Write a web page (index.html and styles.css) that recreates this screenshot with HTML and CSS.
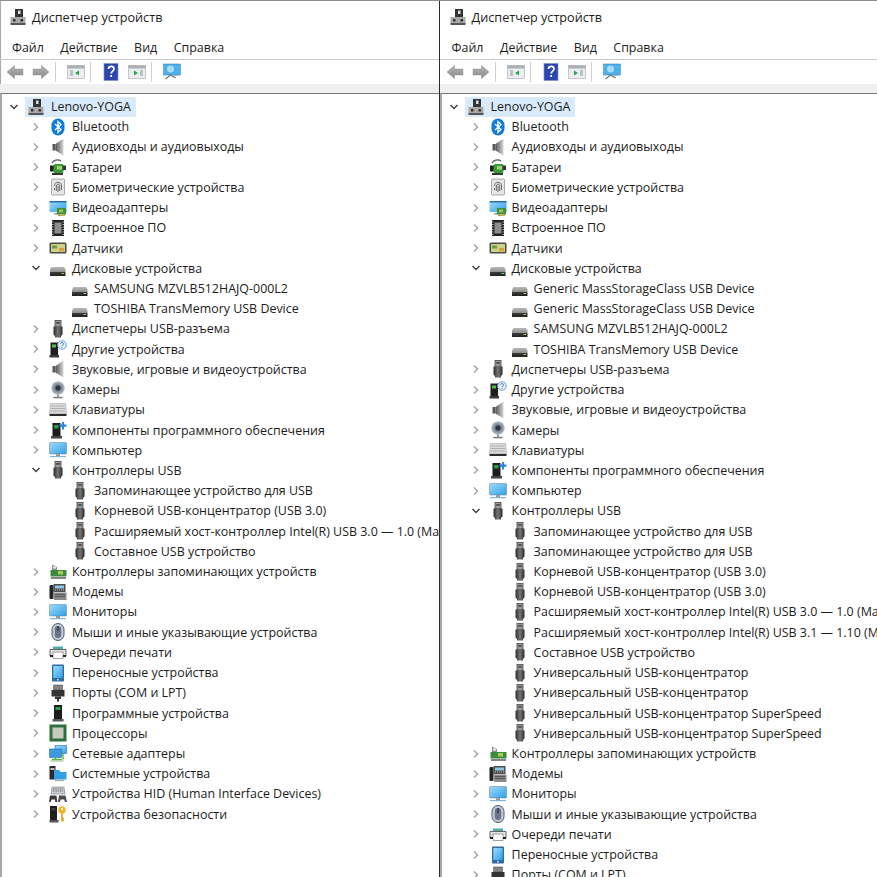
FILE: index.html
```html
<!DOCTYPE html>
<html lang="ru">
<head>
  <meta charset="UTF-8" />
  <title>Диспетчер устройств</title>
  <link rel="stylesheet" href="styles.css">
</head>
<body>

<svg class="sprite" xmlns="http://www.w3.org/2000/svg">
  <defs>
    <linearGradient id="g-usb" x1="0" x2="1" y1="0" y2="0"><stop offset="0" stop-color="#2b2b2b"/><stop offset=".5" stop-color="#777"/><stop offset="1" stop-color="#2b2b2b"/></linearGradient>
    <linearGradient id="g-screen" x1="0" x2="1" y1="0" y2="1"><stop offset="0" stop-color="#9fdcfa"/><stop offset="1" stop-color="#2f9fe6"/></linearGradient>
    <linearGradient id="g-disk" x1="0" x2="0" y1="0" y2="1"><stop offset="0" stop-color="#b9b9b9"/><stop offset=".55" stop-color="#8f8f8f"/><stop offset=".6" stop-color="#3a3a3a"/><stop offset="1" stop-color="#222"/></linearGradient>
    <linearGradient id="g-speaker" x1="0" x2="1" y1="0" y2="0"><stop offset="0" stop-color="#555"/><stop offset="1" stop-color="#d8d8d8"/></linearGradient>
    <linearGradient id="g-arrow" x1="0" x2="0" y1="0" y2="1"><stop offset="0" stop-color="#b5b5b5"/><stop offset="1" stop-color="#8b8b8b"/></linearGradient>
    <radialGradient id="g-lens"><stop offset="0" stop-color="#333"/><stop offset=".45" stop-color="#6f8191"/><stop offset="1" stop-color="#bcc4cb"/></radialGradient>

    <symbol id="chev-r" viewBox="0 0 16 16"><path d="M6 4.500 9.500 8 6 11.500" fill="none" stroke="#a6a6a6" stroke-width="1.500"/></symbol>
    <symbol id="chev-d" viewBox="0 0 16 16"><path d="M4.500 6 8 9.500 11.500 6" fill="none" stroke="#404040" stroke-width="1.500"/></symbol>

    <symbol id="i-host" viewBox="0 0 18 18"><rect x="6" y="1" width="8" height="8" fill="#333"/><rect x="9" y="2.500" width="2.500" height="3.500" fill="#ddd"/><rect x="1.500" y="9" width="15" height="7" fill="#a9a9a9"/><rect x="1.500" y="15" width="15" height="2" fill="#555"/><rect x="4" y="11" width="2.500" height="2.500" fill="#333"/><rect x="11.500" y="11" width="2.500" height="2.500" fill="#333"/></symbol>
    <symbol id="i-bt" viewBox="0 0 18 18"><rect x="2.500" y="0.500" width="13" height="17" rx="6.500" fill="#0f7ae0"/><path d="M6 6 12 11.500 9 14.500V3.500L12 6.500 6 12" fill="none" stroke="#fff" stroke-width="1.300"/></symbol>
    <symbol id="i-speaker" viewBox="0 0 18 18"><rect x="3.500" y="6" width="3" height="6.500" fill="#5a5a5a"/><path d="M6.500 6 14.500 0.500v17l-8-5z" fill="url(#g-speaker)"/></symbol>
    <symbol id="i-battery" viewBox="0 0 18 18"><path d="M3 5c1-3 6-4 9-2" fill="none" stroke="#555" stroke-width="1.300"/><rect x="1" y="7.500" width="5" height="6" fill="#222"/><rect x="4.500" y="6" width="10" height="9" rx="1.500" fill="#3a9a38"/><rect x="8" y="8" width="5.500" height="3.500" fill="#9ad46f"/><rect x="13.500" y="7.500" width="3.500" height="4.500" fill="#333"/><path d="M3 16h11" stroke="#222" stroke-width="1.800"/></symbol>
    <symbol id="i-finger" viewBox="0 0 18 18"><rect x="2.500" y="1" width="13" height="16" rx="1" fill="#e6e6e6" stroke="#a8a8a8"/><g fill="none" stroke="#5e5e5e" stroke-width=".9"><path d="M5.500 8c0-5 7-5 7 0v4"/><path d="M7.300 13V8c0-2.500 3.400-2.500 3.400 0v5"/><path d="M9 7.500V14"/><path d="M5.500 10v2"/></g></symbol>
    <symbol id="i-video" viewBox="0 0 18 18"><rect x="0.500" y="2" width="17" height="11" fill="url(#g-screen)"/><rect x="0.500" y="2" width="17" height="1.500" fill="#2a6fa8"/><rect x="5" y="14" width="7" height="1.500" fill="#9a9a9a"/><rect x="8" y="9" width="9" height="6.500" fill="#3f8f3c"/><rect x="10" y="10.500" width="4" height="3" fill="#a6c24a"/><path d="M9 16.500h7" stroke="#c9a53a" stroke-width="1.200"/></symbol>
    <symbol id="i-chip" viewBox="0 0 18 18"><rect x="3" y="1" width="12" height="16" fill="#222"/><rect x="5.500" y="3.500" width="7" height="11" fill="#8e8e8e"/><path d="M2.500 3h2M2.500 5.500h2M2.500 8h2M2.500 10.500h2M2.500 13h2M2.500 15.500h2M13.500 3h2M13.500 5.500h2M13.500 8h2M13.500 10.500h2M13.500 13h2M13.500 15.500h2" stroke="#ddd" stroke-width=".8"/></symbol>
    <symbol id="i-sensor" viewBox="0 0 18 18"><rect x="0.500" y="3.500" width="17" height="11" rx="1.500" fill="#4b4b3e"/><rect x="2" y="5" width="14" height="8" fill="#cfd08a"/><rect x="3" y="6.500" width="5" height="3" fill="#6d9c45"/><rect x="10" y="9" width="5" height="3" fill="#d6a23d"/></symbol>
    <symbol id="i-disk" viewBox="0 0 18 18"><path d="M2.500 8h12.500L16.500 10.500V17H1V10.500z" fill="url(#g-disk)"/><rect x="12.500" y="14" width="2.500" height="1" fill="#8ccf6a"/></symbol>
    <symbol id="i-usb" viewBox="0 0 18 18"><rect x="6" y="0.500" width="6" height="6" fill="#999" stroke="#444" stroke-width=".8"/><rect x="7.500" y="2" width="1.100" height="1.800" fill="#222"/><rect x="9.400" y="2" width="1.100" height="1.800" fill="#222"/><path d="M4.500 6.500h9v8L12 16v1.500H6V16l-1.500-1.500z" fill="url(#g-usb)"/></symbol>
    <symbol id="i-other" viewBox="0 0 18 18"><path d="M1.500 2.500h7.500V15H1.500z" fill="#1f1f1f"/><rect x="3" y="4.500" width="4" height="3" fill="#58b947"/><path d="M0.500 15h9.500v2.500H0.500z" fill="#3a3a3a"/><circle cx="13" cy="5" r="4.300" fill="#e8f1fb" stroke="#6d9fd8"/><path d="M11.500 4c0-2 3-2 3 0 0 1-1.500 1-1.500 2.300M13 7.200v.8" fill="none" stroke="#3d74c0"/></symbol>
    <symbol id="i-camera" viewBox="0 0 18 18"><circle cx="9" cy="7" r="6.800" fill="url(#g-lens)"/><circle cx="9" cy="7" r="2.500" fill="#30343a"/><path d="M9 13.500v2M4.500 16.500h9" stroke="#777" stroke-width="1.600"/></symbol>
    <symbol id="i-keyboard" viewBox="0 0 18 18"><path d="M1.500 2.500h15l1 10H.5z" fill="#dcdcdc" stroke="#a2a2a2" stroke-width=".6"/><path d="M2.500 5h13M2.300 7.500h13.400M2.100 10h13.800" stroke="#9a9a9a" stroke-dasharray="1.400 .6"/><rect x="0.500" y="13" width="17" height="2" fill="#2a2a2a"/></symbol>
    <symbol id="i-comp" viewBox="0 0 18 18"><rect x="3.500" y="2" width="8" height="13" fill="#1d1d1d"/><rect x="5" y="4" width="4.500" height="3.500" fill="#2d9a46"/><rect x="2" y="15" width="11" height="2.500" fill="#444"/><path d="M14 1v7.500M10.500 4.700h7" stroke="#2b84e0" stroke-width="2.200"/></symbol>
    <symbol id="i-monitor" viewBox="0 0 18 18"><rect x="0.500" y="1.500" width="17" height="11.500" rx=".8" fill="url(#g-screen)" stroke="#5f7f96" stroke-width=".5"/><rect x="7" y="13" width="4" height="2" fill="#9a9a9a"/><rect x="1" y="15" width="16" height="1.200" fill="#82b4d6"/></symbol>
    <symbol id="i-storage" viewBox="0 0 18 18"><path d="M3 1.500l5 2.500v3H3z" fill="#8f8f8f"/><rect x="4" y="3.500" width="3" height="2" fill="#eee"/><rect x="1.500" y="7" width="16" height="6.500" fill="#3c8a3e"/><rect x="9" y="8" width="5" height="3.500" fill="#aacb52"/><path d="M2 15h15" stroke="#777" stroke-width="1.800"/></symbol>
    <symbol id="i-modem" viewBox="0 0 18 18"><rect x="0.500" y="2" width="4" height="14" rx="1" fill="#252525"/><rect x="4.500" y="1" width="12" height="8" fill="#4d4d4d"/><rect x="6" y="2.500" width="9" height="3" fill="#8cc6e8"/><path d="M6 7h9" stroke="#ccc" stroke-dasharray="1 1"/><rect x="5" y="9.500" width="12.500" height="7.500" fill="#8a8a8a"/><path d="M6.500 11.500h9M6.500 13.500h9" stroke="#222" stroke-dasharray="1 1"/></symbol>
    <symbol id="i-mouse" viewBox="0 0 18 18"><rect x="3" y="0.500" width="12" height="17" rx="6" fill="#c4cad4" stroke="#4d5b70"/><rect x="5.800" y="3" width="6.400" height="12" rx="3.200" fill="#69738a"/><rect x="8.300" y="3" width="1.400" height="5" fill="#333a46"/></symbol>
    <symbol id="i-printer" viewBox="0 0 18 18"><path d="M4 3.500h10v3H4z" fill="#49a6e0"/><path d="M1 6.500h16v6.500H1z" fill="#e4e4e4" stroke="#444" stroke-width=".8"/><rect x="4" y="9" width="10" height="6.500" fill="#fff" stroke="#666" stroke-width=".6"/><path d="M1 13h3M14 13h3" stroke="#222" stroke-width="2"/><path d="M6 5h6" stroke="#6ab04c" stroke-width="1.200"/></symbol>
    <symbol id="i-portable" viewBox="0 0 18 18"><rect x="3" y="0.500" width="12" height="17" rx="1" fill="#2f6c9f"/><rect x="4.300" y="2" width="9.400" height="12" fill="url(#g-screen)"/><circle cx="9" cy="15.700" r=".9" fill="#dde"/></symbol>
    <symbol id="i-ports" viewBox="0 0 18 18"><path d="M4.500 1h9v5h-9z" fill="#999" stroke="#555" stroke-width=".6"/><path d="M6 1v5M8 1v5M10 1v5M12 1v5" stroke="#555" stroke-width=".6"/><rect x="2.500" y="6" width="13" height="6.500" fill="#333"/><path d="M6 12.500h6V15H6zM8 15h2v2.500H8z" fill="#333"/></symbol>
    <symbol id="i-soft" viewBox="0 0 18 18"><rect x="5" y="1" width="8" height="14" fill="#1c1c1c"/><rect x="6.500" y="3" width="5" height="3" fill="#2d9a46"/><rect x="3.500" y="15" width="11" height="2.500" fill="#555"/></symbol>
    <symbol id="i-cpu" viewBox="0 0 18 18"><rect x="0.500" y="0.500" width="17" height="17" fill="#2e6f3c"/><rect x="3.500" y="3.500" width="11" height="11" fill="#c9c9c0"/></symbol>
    <symbol id="i-net" viewBox="0 0 18 18"><rect x="6" y="0.500" width="11.500" height="8" fill="url(#g-screen)" stroke="#2d6ea1" stroke-width=".6"/><rect x="0.500" y="4" width="12" height="8.500" fill="#3b9ae0" stroke="#2d6ea1" stroke-width=".6"/><path d="M6.500 12.500v2M3 14.500h10M14 8.500v6" stroke="#55b04a" stroke-width="1.400"/><path d="M1.500 16h13" stroke="#8ecb7a"/></symbol>
    <symbol id="i-system" viewBox="0 0 18 18"><rect x="0.500" y="1" width="6" height="13.500" fill="#2a2a2a"/><rect x="1.500" y="3" width="4" height="2" fill="#bbb"/><path d="M5 5h5l1.500 2h6v7.500H5z" fill="#34a0e4"/><path d="M6 15.500h9" stroke="#a9a9a9" stroke-width="1.200"/></symbol>
    <symbol id="i-hid" viewBox="0 0 18 18"><path d="M3 2h12l1 7H2z" fill="#c7ccd2" stroke="#7b7f85" stroke-width=".6"/><path d="M4 4h10M3.500 6h11" stroke="#777" stroke-dasharray="1.200 .6"/><path d="M1 10.500h6.500l.8 6.500h-2L6 14.500H2.500L1.800 17H0z" fill="#3a3a3a"/><path d="M10 10.500h6.500l1.500 6.500h-2l-.8-2.500h-3.500l-.7 2.500h-2z" fill="#4b4b4b"/></symbol>
    <symbol id="i-key" viewBox="0 0 18 18"><rect x="1" y="1" width="7" height="14" fill="#1e1e1e"/><rect x="2.500" y="3" width="4" height="2.500" fill="#3f3f3f"/><rect x="0.500" y="15" width="9" height="2.500" fill="#555"/><circle cx="13" cy="5" r="3.800" fill="#f0b52e"/><circle cx="13" cy="4" r="1" fill="#fff"/><path d="M13 8v8.500M13 13.500h2M13 15.500h2" stroke="#e0a526" stroke-width="1.700"/></symbol>

    <symbol id="t-back" viewBox="0 0 18 18"><path d="M8.500 2.500V6H17v6H8.500v3.500L1 9z" fill="url(#g-arrow)" stroke="#8d8d8d" stroke-width=".5"/></symbol>
    <symbol id="t-forward" viewBox="0 0 18 18"><path d="M9.500 2.500V6H1v6h8.500v3.500L17 9z" fill="url(#g-arrow)" stroke="#8d8d8d" stroke-width=".5"/></symbol>
    <symbol id="t-console" viewBox="0 0 18 18"><rect x="0.500" y="2.500" width="17" height="13" fill="#eaeef0" stroke="#a3a8ad" stroke-width=".6"/><rect x="0.500" y="2.500" width="17" height="3" fill="#a9b0b6"/><path d="M3 8h3M3 10h3M3 12h3" stroke="#8a9096"/><path d="M12 7.500v5l-4-2.500z" fill="#2aa34a"/></symbol>
    <symbol id="t-action" viewBox="0 0 18 18"><rect x="0.500" y="2.500" width="17" height="13" fill="#eaeef0" stroke="#a3a8ad" stroke-width=".6"/><rect x="0.500" y="2.500" width="17" height="3" fill="#a9b0b6"/><path d="M12 8h3M12 10h3M12 12h3" stroke="#8a9096"/><path d="M6 7.500v5l4-2.500z" fill="#2aa34a"/></symbol>
    <symbol id="t-help" viewBox="0 0 18 18"><rect x="2" y="0.500" width="14" height="17" fill="#2c46ae"/><rect x="2" y="0.500" width="14" height="17" fill="none" stroke="#7f90d8" stroke-width=".7"/><path d="M6.500 6c0-3.500 5.500-3.500 5.500 0 0 2-2.800 2.200-2.800 4.500M9.200 12v2" fill="none" stroke="#fff" stroke-width="1.700"/></symbol>
    <symbol id="t-scan" viewBox="0 0 18 18"><rect x="0.500" y="1" width="17" height="11" fill="#4fb0ea" stroke="#2e7fb3" stroke-width=".5"/><circle cx="7.500" cy="6" r="3.500" fill="#a9def8"/><path d="M7.500 12l-5 4M7.500 12l5 3" stroke="#6d6d6d" stroke-width="1.100"/><path d="M9 12h6" stroke="#6fa9c9" stroke-width="1.200"/></symbol>
  </defs>
</svg>

<main class="panels">

  <section class="panel">
    <div class="title-bar"><svg class="title-icon"><use href="#i-host"/></svg><span>Диспетчер устройств</span></div>
    <nav class="menu-bar"><span>Файл</span><span>Действие</span><span>Вид</span><span>Справка</span></nav>
    <div class="tool-bar">
      <svg class="tool"><use href="#t-back"/></svg>
      <svg class="tool"><use href="#t-forward"/></svg>
      <i class="tool-sep"></i>
      <svg class="tool"><use href="#t-console"/></svg>
      <i class="tool-sep"></i>
      <svg class="tool"><use href="#t-help"/></svg>
      <svg class="tool"><use href="#t-action"/></svg>
      <i class="tool-sep"></i>
      <svg class="tool"><use href="#t-scan"/></svg>
    </div>
    <div class="tree">
      <div class="row root"><svg class="chev"><use href="#chev-d"/></svg><div class="selected"><svg class="icon"><use href="#i-host"/></svg><span>Lenovo-YOGA</span></div></div>
      <div class="row"><svg class="chev"><use href="#chev-r"/></svg><svg class="icon"><use href="#i-bt"/></svg><span>Bluetooth</span></div>
      <div class="row"><svg class="chev"><use href="#chev-r"/></svg><svg class="icon"><use href="#i-speaker"/></svg><span>Аудиовходы и аудиовыходы</span></div>
      <div class="row"><svg class="chev"><use href="#chev-r"/></svg><svg class="icon"><use href="#i-battery"/></svg><span>Батареи</span></div>
      <div class="row"><svg class="chev"><use href="#chev-r"/></svg><svg class="icon"><use href="#i-finger"/></svg><span>Биометрические устройства</span></div>
      <div class="row"><svg class="chev"><use href="#chev-r"/></svg><svg class="icon"><use href="#i-video"/></svg><span>Видеоадаптеры</span></div>
      <div class="row"><svg class="chev"><use href="#chev-r"/></svg><svg class="icon"><use href="#i-chip"/></svg><span>Встроенное ПО</span></div>
      <div class="row"><svg class="chev"><use href="#chev-r"/></svg><svg class="icon"><use href="#i-sensor"/></svg><span>Датчики</span></div>
      <div class="row"><svg class="chev"><use href="#chev-d"/></svg><svg class="icon"><use href="#i-disk"/></svg><span>Дисковые устройства</span></div>
      <div class="row child"><svg class="chev"></svg><svg class="icon"><use href="#i-disk"/></svg><span>SAMSUNG MZVLB512HAJQ-000L2</span></div>
      <div class="row child"><svg class="chev"></svg><svg class="icon"><use href="#i-disk"/></svg><span>TOSHIBA TransMemory USB Device</span></div>
      <div class="row"><svg class="chev"><use href="#chev-r"/></svg><svg class="icon"><use href="#i-usb"/></svg><span>Диспетчеры USB-разъема</span></div>
      <div class="row"><svg class="chev"><use href="#chev-r"/></svg><svg class="icon"><use href="#i-other"/></svg><span>Другие устройства</span></div>
      <div class="row"><svg class="chev"><use href="#chev-r"/></svg><svg class="icon"><use href="#i-speaker"/></svg><span>Звуковые, игровые и видеоустройства</span></div>
      <div class="row"><svg class="chev"><use href="#chev-r"/></svg><svg class="icon"><use href="#i-camera"/></svg><span>Камеры</span></div>
      <div class="row"><svg class="chev"><use href="#chev-r"/></svg><svg class="icon"><use href="#i-keyboard"/></svg><span>Клавиатуры</span></div>
      <div class="row"><svg class="chev"><use href="#chev-r"/></svg><svg class="icon"><use href="#i-comp"/></svg><span>Компоненты программного обеспечения</span></div>
      <div class="row"><svg class="chev"><use href="#chev-r"/></svg><svg class="icon"><use href="#i-monitor"/></svg><span>Компьютер</span></div>
      <div class="row"><svg class="chev"><use href="#chev-d"/></svg><svg class="icon"><use href="#i-usb"/></svg><span>Контроллеры USB</span></div>
      <div class="row child"><svg class="chev"></svg><svg class="icon"><use href="#i-usb"/></svg><span>Запоминающее устройство для USB</span></div>
      <div class="row child"><svg class="chev"></svg><svg class="icon"><use href="#i-usb"/></svg><span>Корневой USB-концентратор (USB 3.0)</span></div>
      <div class="row child"><svg class="chev"></svg><svg class="icon"><use href="#i-usb"/></svg><span>Расширяемый хост-контроллер Intel(R) USB 3.0 — 1.0 (Майкрософт)</span></div>
      <div class="row child"><svg class="chev"></svg><svg class="icon"><use href="#i-usb"/></svg><span>Составное USB устройство</span></div>
      <div class="row"><svg class="chev"><use href="#chev-r"/></svg><svg class="icon"><use href="#i-storage"/></svg><span>Контроллеры запоминающих устройств</span></div>
      <div class="row"><svg class="chev"><use href="#chev-r"/></svg><svg class="icon"><use href="#i-modem"/></svg><span>Модемы</span></div>
      <div class="row"><svg class="chev"><use href="#chev-r"/></svg><svg class="icon"><use href="#i-monitor"/></svg><span>Мониторы</span></div>
      <div class="row"><svg class="chev"><use href="#chev-r"/></svg><svg class="icon"><use href="#i-mouse"/></svg><span>Мыши и иные указывающие устройства</span></div>
      <div class="row"><svg class="chev"><use href="#chev-r"/></svg><svg class="icon"><use href="#i-printer"/></svg><span>Очереди печати</span></div>
      <div class="row"><svg class="chev"><use href="#chev-r"/></svg><svg class="icon"><use href="#i-portable"/></svg><span>Переносные устройства</span></div>
      <div class="row"><svg class="chev"><use href="#chev-r"/></svg><svg class="icon"><use href="#i-ports"/></svg><span>Порты (COM и LPT)</span></div>
      <div class="row"><svg class="chev"><use href="#chev-r"/></svg><svg class="icon"><use href="#i-soft"/></svg><span>Программные устройства</span></div>
      <div class="row"><svg class="chev"><use href="#chev-r"/></svg><svg class="icon"><use href="#i-cpu"/></svg><span>Процессоры</span></div>
      <div class="row"><svg class="chev"><use href="#chev-r"/></svg><svg class="icon"><use href="#i-net"/></svg><span>Сетевые адаптеры</span></div>
      <div class="row"><svg class="chev"><use href="#chev-r"/></svg><svg class="icon"><use href="#i-system"/></svg><span>Системные устройства</span></div>
      <div class="row"><svg class="chev"><use href="#chev-r"/></svg><svg class="icon"><use href="#i-hid"/></svg><span>Устройства HID (Human Interface Devices)</span></div>
      <div class="row"><svg class="chev"><use href="#chev-r"/></svg><svg class="icon"><use href="#i-key"/></svg><span>Устройства безопасности</span></div>
    </div>
  </section>

  <section class="panel">
    <div class="title-bar"><svg class="title-icon"><use href="#i-host"/></svg><span>Диспетчер устройств</span></div>
    <nav class="menu-bar"><span>Файл</span><span>Действие</span><span>Вид</span><span>Справка</span></nav>
    <div class="tool-bar">
      <svg class="tool"><use href="#t-back"/></svg>
      <svg class="tool"><use href="#t-forward"/></svg>
      <i class="tool-sep"></i>
      <svg class="tool"><use href="#t-console"/></svg>
      <i class="tool-sep"></i>
      <svg class="tool"><use href="#t-help"/></svg>
      <svg class="tool"><use href="#t-action"/></svg>
      <i class="tool-sep"></i>
      <svg class="tool"><use href="#t-scan"/></svg>
    </div>
    <div class="tree">
      <div class="row root"><svg class="chev"><use href="#chev-d"/></svg><div class="selected"><svg class="icon"><use href="#i-host"/></svg><span>Lenovo-YOGA</span></div></div>
      <div class="row"><svg class="chev"><use href="#chev-r"/></svg><svg class="icon"><use href="#i-bt"/></svg><span>Bluetooth</span></div>
      <div class="row"><svg class="chev"><use href="#chev-r"/></svg><svg class="icon"><use href="#i-speaker"/></svg><span>Аудиовходы и аудиовыходы</span></div>
      <div class="row"><svg class="chev"><use href="#chev-r"/></svg><svg class="icon"><use href="#i-battery"/></svg><span>Батареи</span></div>
      <div class="row"><svg class="chev"><use href="#chev-r"/></svg><svg class="icon"><use href="#i-finger"/></svg><span>Биометрические устройства</span></div>
      <div class="row"><svg class="chev"><use href="#chev-r"/></svg><svg class="icon"><use href="#i-video"/></svg><span>Видеоадаптеры</span></div>
      <div class="row"><svg class="chev"><use href="#chev-r"/></svg><svg class="icon"><use href="#i-chip"/></svg><span>Встроенное ПО</span></div>
      <div class="row"><svg class="chev"><use href="#chev-r"/></svg><svg class="icon"><use href="#i-sensor"/></svg><span>Датчики</span></div>
      <div class="row"><svg class="chev"><use href="#chev-d"/></svg><svg class="icon"><use href="#i-disk"/></svg><span>Дисковые устройства</span></div>
      <div class="row child"><svg class="chev"></svg><svg class="icon"><use href="#i-disk"/></svg><span>Generic MassStorageClass USB Device</span></div>
      <div class="row child"><svg class="chev"></svg><svg class="icon"><use href="#i-disk"/></svg><span>Generic MassStorageClass USB Device</span></div>
      <div class="row child"><svg class="chev"></svg><svg class="icon"><use href="#i-disk"/></svg><span>SAMSUNG MZVLB512HAJQ-000L2</span></div>
      <div class="row child"><svg class="chev"></svg><svg class="icon"><use href="#i-disk"/></svg><span>TOSHIBA TransMemory USB Device</span></div>
      <div class="row"><svg class="chev"><use href="#chev-r"/></svg><svg class="icon"><use href="#i-usb"/></svg><span>Диспетчеры USB-разъема</span></div>
      <div class="row"><svg class="chev"><use href="#chev-r"/></svg><svg class="icon"><use href="#i-other"/></svg><span>Другие устройства</span></div>
      <div class="row"><svg class="chev"><use href="#chev-r"/></svg><svg class="icon"><use href="#i-speaker"/></svg><span>Звуковые, игровые и видеоустройства</span></div>
      <div class="row"><svg class="chev"><use href="#chev-r"/></svg><svg class="icon"><use href="#i-camera"/></svg><span>Камеры</span></div>
      <div class="row"><svg class="chev"><use href="#chev-r"/></svg><svg class="icon"><use href="#i-keyboard"/></svg><span>Клавиатуры</span></div>
      <div class="row"><svg class="chev"><use href="#chev-r"/></svg><svg class="icon"><use href="#i-comp"/></svg><span>Компоненты программного обеспечения</span></div>
      <div class="row"><svg class="chev"><use href="#chev-r"/></svg><svg class="icon"><use href="#i-monitor"/></svg><span>Компьютер</span></div>
      <div class="row"><svg class="chev"><use href="#chev-d"/></svg><svg class="icon"><use href="#i-usb"/></svg><span>Контроллеры USB</span></div>
      <div class="row child"><svg class="chev"></svg><svg class="icon"><use href="#i-usb"/></svg><span>Запоминающее устройство для USB</span></div>
      <div class="row child"><svg class="chev"></svg><svg class="icon"><use href="#i-usb"/></svg><span>Запоминающее устройство для USB</span></div>
      <div class="row child"><svg class="chev"></svg><svg class="icon"><use href="#i-usb"/></svg><span>Корневой USB-концентратор (USB 3.0)</span></div>
      <div class="row child"><svg class="chev"></svg><svg class="icon"><use href="#i-usb"/></svg><span>Корневой USB-концентратор (USB 3.0)</span></div>
      <div class="row child"><svg class="chev"></svg><svg class="icon"><use href="#i-usb"/></svg><span>Расширяемый хост-контроллер Intel(R) USB 3.0 — 1.0 (Майкрософт)</span></div>
      <div class="row child"><svg class="chev"></svg><svg class="icon"><use href="#i-usb"/></svg><span>Расширяемый хост-контроллер Intel(R) USB 3.1 — 1.10 (Майкрософт)</span></div>
      <div class="row child"><svg class="chev"></svg><svg class="icon"><use href="#i-usb"/></svg><span>Составное USB устройство</span></div>
      <div class="row child"><svg class="chev"></svg><svg class="icon"><use href="#i-usb"/></svg><span>Универсальный USB-концентратор</span></div>
      <div class="row child"><svg class="chev"></svg><svg class="icon"><use href="#i-usb"/></svg><span>Универсальный USB-концентратор</span></div>
      <div class="row child"><svg class="chev"></svg><svg class="icon"><use href="#i-usb"/></svg><span>Универсальный USB-концентратор SuperSpeed</span></div>
      <div class="row child"><svg class="chev"></svg><svg class="icon"><use href="#i-usb"/></svg><span>Универсальный USB-концентратор SuperSpeed</span></div>
      <div class="row"><svg class="chev"><use href="#chev-r"/></svg><svg class="icon"><use href="#i-storage"/></svg><span>Контроллеры запоминающих устройств</span></div>
      <div class="row"><svg class="chev"><use href="#chev-r"/></svg><svg class="icon"><use href="#i-modem"/></svg><span>Модемы</span></div>
      <div class="row"><svg class="chev"><use href="#chev-r"/></svg><svg class="icon"><use href="#i-monitor"/></svg><span>Мониторы</span></div>
      <div class="row"><svg class="chev"><use href="#chev-r"/></svg><svg class="icon"><use href="#i-mouse"/></svg><span>Мыши и иные указывающие устройства</span></div>
      <div class="row"><svg class="chev"><use href="#chev-r"/></svg><svg class="icon"><use href="#i-printer"/></svg><span>Очереди печати</span></div>
      <div class="row"><svg class="chev"><use href="#chev-r"/></svg><svg class="icon"><use href="#i-portable"/></svg><span>Переносные устройства</span></div>
      <div class="row"><svg class="chev"><use href="#chev-r"/></svg><svg class="icon"><use href="#i-ports"/></svg><span>Порты (COM и LPT)</span></div>
    </div>
  </section>

</main>

</body>
</html>
```

FILE: styles.css
```css
* {
  margin: 0;
  padding: 0;
  box-sizing: border-box;
}

html, body {
  height: 100%;
  overflow: hidden;
}

body {
  background-color: #fff;
  color: #1c1c1c;
  font-family: "Open Sans", "Noto Sans", sans-serif;
  font-size: 12.45px;
}

.sprite {
  display: block;
  width: 0;
  height: 0;
}

.panels {
  display: flex;
  height: 877px;
  border-top: 1px solid #8f8f8f;
}

.panel {
  flex: 0 0 439.6px;
  overflow: hidden;
  display: flex;
  flex-direction: column;
  border-right: 1px solid #2a2a2a;
}

.panel:first-child {
  box-shadow: inset 1px 0 0 #a8a8a8;
}

.panel:last-child {
  border-right: none;
  flex: 1;
  min-width: 0;
}

.title-bar {
  height: 32px;
  display: flex;
  align-items: center;
  gap: 5px;
  padding-left: 9px;
  font-size: 12.65px;
  flex: none;
}

.title-icon {
  width: 18px;
  height: 18px;
}

.menu-bar {
  height: 27px;
  display: flex;
  align-items: center;
  gap: 16.5px;
  padding: 3px 0 0 12px;
  border-bottom: 1px solid #c9c9c9;
  flex: none;
}

.tool-bar {
  height: 24px;
  display: flex;
  align-items: center;
  padding-left: 6px;
  flex: none;
}

.tool {
  width: 18px;
  height: 18px;
  margin-right: 8px;
}

.tool-sep {
  width: 1px;
  height: 20px;
  background-color: #cfcfcf;
  margin-right: 11px;
  margin-left: -3px;
}

.tree {
  flex: 1;
  margin-top: 9px;
  padding-top: 2.4px;
  border-top: 1px solid #7a7a7a;
  box-shadow: 0 -9px 0 #f0f0f0;
  border-left: 2px solid #a8a8a8;
}

.row {
  height: 20.23px;
  display: flex;
  align-items: center;
  padding-left: 26px;
  white-space: nowrap;
}

.row.root {
  padding-left: 4px;
}

.row.child {
  padding-left: 48px;
}

.chev {
  flex: none;
  width: 16px;
  height: 16px;
}

.icon {
  flex: none;
  width: 18px;
  height: 18px;
  margin: 0 5px;
}

.selected {
  display: flex;
  align-items: center;
  height: 20px;
  margin-left: 3px;
  background-color: #d9ebfa;
  padding-right: 5px;
}

.row.root .icon {
  margin: 0 6px 0 2px;
}
```
